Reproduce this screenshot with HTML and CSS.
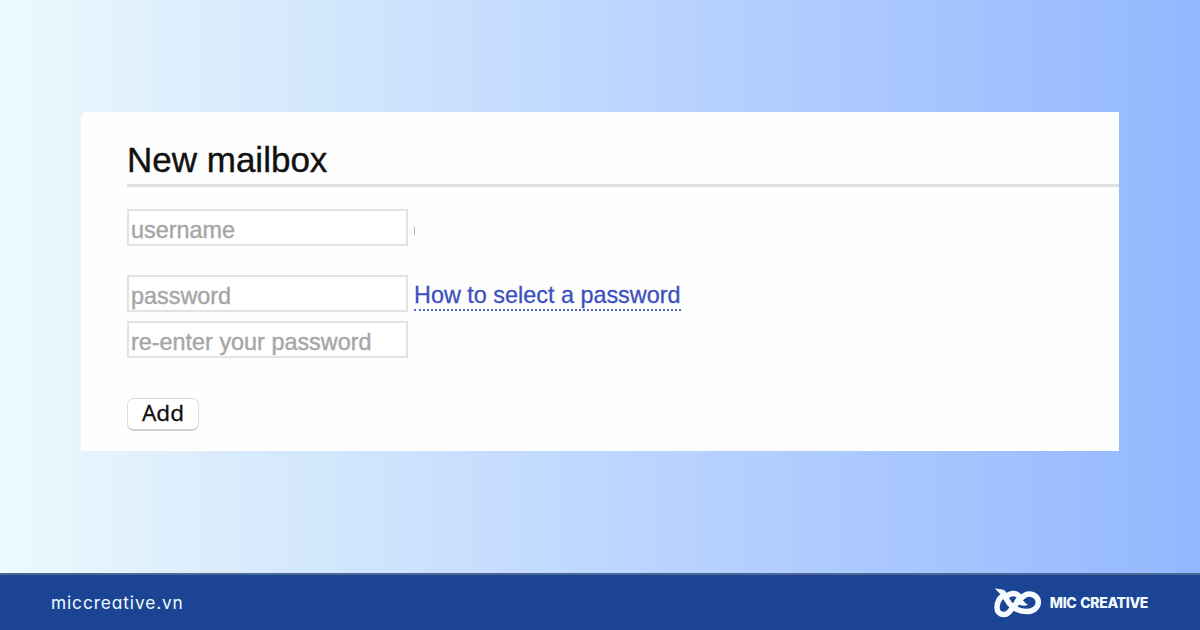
FILE: index.html
```html
<!DOCTYPE html>
<html lang="en">
<head>
    <meta charset="UTF-8" />
    <title>New mailbox</title>
    <link rel="stylesheet" href="styles.css">
</head>
<body>
    <div class="content">
        <div class="panel">
            <h1 class="title">New mailbox</h1>
            <form class="mailboxForm">
                <div class="row username">
                    <input class="field" type="text" placeholder="username" />
                    <span class="mark"></span>
                </div>
                <div class="row">
                    <input class="field" type="password" placeholder="password" />
                    <a class="help" href="#">How to select a password</a>
                </div>
                <div class="row">
                    <input class="field" type="password" placeholder="re-enter your password" />
                </div>
                <button class="add" type="button">Add</button>
            </form>
        </div>
    </div>
    <div class="footer">
        <div class="site">miccreative.vn</div>
        <div class="brand">
            <svg class="logo" width="48" height="32" viewBox="0 0 48 32">
                <path class="strand" d="M10 8C5 11 3 16 3 20.500C3 25 6 27.500 10 27.500C16 27.500 17 21 22 17C26 12 30 7 35 7C40.500 7 44.300 10.500 44.300 15C44.300 21 39 24.500 33 24.500C26 24.500 19 21 15 16L8 5"/>
                <path class="strand" d="M12 10C16 5.500 22 5.500 25 9L28 12"/>
                <path class="leaf" d="M1 1C5 3 9 1 12 5L15 11L9 12C7 6 4 6 1 1ZM25 7C27 12 30 15 34 18C29 20 24 18 20 14Z"/>
            </svg>
            <span class="brandName">MIC CREATIVE</span>
        </div>
    </div>
</body>
</html>
```
FILE: styles.css
```css
body
{
    margin: 0;
    height: 630px;
    overflow: hidden;
    display: flex;
    flex-direction: column;
    font-family: "Liberation Sans", Arial, sans-serif;
    background: linear-gradient(to right, #ebfafd 0%, #d7eafc 22%, #bed7ff 50%, #93b7ff 100%);
}

.content
{
    flex: 1;
    padding: 112px 81px 0 81px;
}

.panel
{
    box-sizing: border-box;
    height: 339px;
    padding: 27px 0 0 46px;
    background-color: #fefefe;
    border-top-left-radius: 5px;
}

.title
{
    box-sizing: border-box;
    height: 48px;
    margin: 0 0 22px 0;
    border-bottom: 3px solid #dedede;
    font-size: 35px;
    line-height: 42px;
    font-weight: normal;
    color: #111;
    -webkit-text-stroke: 0.4px #111;
}

.row
{
    display: flex;
    align-items: center;
    gap: 6px;
    height: 37px;
    margin-bottom: 9px;
}

.row.username
{
    margin-bottom: 29px;
}

.field
{
    box-sizing: border-box;
    width: 281px;
    height: 37px;
    padding: 5px 3px 0 2px;
    border: 2px solid #e2e2e2;
    border-radius: 0;
    background-color: #fff;
    font-family: inherit;
    font-size: 23.4px;
}

.field::placeholder
{
    color: #a6a6a6;
    -webkit-text-stroke: 0.4px #a6a6a6;
}

.mark
{
    width: 1px;
    height: 8px;
    margin-top: 7px;
    background-color: #b5b5b5;
}

.help
{
    margin-top: 5px;
    border-bottom: 2px dotted #5266bd;
    font-size: 23.4px;
    line-height: 28px;
    color: #3c50be;
    text-decoration: none;
    -webkit-text-stroke: 0.3px #3c50be;
}

.add
{
    display: block;
    box-sizing: border-box;
    width: 72px;
    height: 33px;
    margin-top: 40px;
    padding: 0 0 2px 0;
    border: 1px solid #dcdcdc;
    border-bottom: 2px solid #d2d2d2;
    border-radius: 7px;
    background-color: #fff;
    font-family: "Noto Sans", sans-serif;
    font-size: 22.5px;
    line-height: 28px;
    color: #111;
    -webkit-text-stroke: 0.3px #111;
}

.footer
{
    box-sizing: border-box;
    display: flex;
    align-items: center;
    justify-content: space-between;
    height: 57px;
    padding: 0 52px 0 51px;
    border-top: 2px solid #4b6794;
    background-color: #1b4594;
    color: #f1faff;
}

.site
{
    font-family: Inter, sans-serif;
    font-size: 17.3px;
    letter-spacing: 0.9px;
    font-feature-settings: "cv11";
}

.brand
{
    display: flex;
    align-items: center;
    gap: 8px;
}

.brandName
{
    font-family: Inter, sans-serif;
    font-size: 14px;
    font-weight: 800;
    letter-spacing: -0.35px;
    word-spacing: 1.2px;
}

.strand
{
    fill: none;
    stroke: #f5fbff;
    stroke-width: 5.5;
    stroke-linejoin: round;
}

.leaf
{
    fill: #f5fbff;
}
```
